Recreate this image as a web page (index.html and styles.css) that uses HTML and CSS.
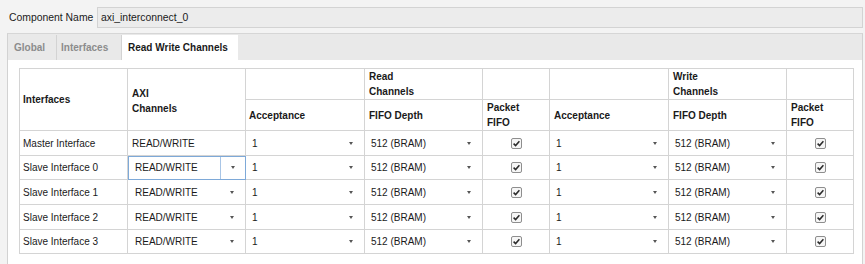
FILE: index.html
```html
<!DOCTYPE html>
<html lang="en">
<head>
    <meta charset="UTF-8">
    <title>axi_interconnect_0 - Read Write Channels</title>
    <link rel="stylesheet" href="styles.css">
</head>
<body>
    <div class="name-row">
        <label class="name-label">Component Name</label>
        <div class="name-input">axi_interconnect_0</div>
    </div>

    <div class="tabs-panel">
        <div class="tab-bar">
            <div class="tab tab-global">Global</div>
            <div class="tab tab-ifaces">Interfaces</div>
            <div class="tab tab-active">Read Write Channels</div>
        </div>

        <div class="panel-body">
            <table class="chan-table">
                <colgroup>
                    <col style="width:108px">
                    <col style="width:118px">
                    <col style="width:119px">
                    <col style="width:118px">
                    <col style="width:67px">
                    <col style="width:119px">
                    <col style="width:118px">
                    <col style="width:67px">
                </colgroup>
                <thead>
                    <tr class="head-1">
                        <th rowspan="2">Interfaces</th>
                        <th rowspan="2" class="axi-head">AXI<br>Channels</th>
                        <th></th>
                        <th>Read<br>Channels</th>
                        <th></th>
                        <th></th>
                        <th>Write<br>Channels</th>
                        <th></th>
                    </tr>
                    <tr class="head-2">
                        <th>Acceptance</th>
                        <th>FIFO Depth</th>
                        <th>Packet<br>FIFO</th>
                        <th>Acceptance</th>
                        <th>FIFO Depth</th>
                        <th>Packet<br>FIFO</th>
                    </tr>
                </thead>
                <tbody id="rows"></tbody>
            </table>
        </div>
    </div>

    <script>
        const rows = [
            { name: 'Master Interface', h: 25, fixed: true },
            { name: 'Slave Interface 0', h: 24, focus: true },
            { name: 'Slave Interface 1', h: 25 },
            { name: 'Slave Interface 2', h: 25 },
            { name: 'Slave Interface 3', h: 24 }
        ];

        const arrow = '<span class="arrow"><i></i></span>';
        const check = '<span class="check"><svg width="9" height="9" viewBox="0 0 9 9"><path d="M1.6 4.6 L3.6 6.6 L7.4 2.2" fill="none" stroke="#2a2a2a" stroke-width="1.5"/></svg></span>';

        function combo(text) {
            return `<div class="combo"><span class="val">${text}</span>${arrow}</div>`;
        }

        const body = document.getElementById('rows');
        rows.forEach(r => {
            const tr = document.createElement('tr');
            tr.style.height = r.h + 'px';

            let axi;
            if (r.fixed) {
                axi = '<td class="plain">READ/WRITE</td>';
            } else if (r.focus) {
                axi = `<td class="sel focused">${combo('READ/WRITE')}</td>`;
            } else {
                axi = `<td class="sel axi">${combo('READ/WRITE')}</td>`;
            }

            tr.innerHTML = `
                <td class="iface">${r.name}</td>
                ${axi}
                <td class="sel">${combo('1')}</td>
                <td class="sel">${combo('512 (BRAM)')}</td>
                <td class="box">${check}</td>
                <td class="sel">${combo('1')}</td>
                <td class="sel">${combo('512 (BRAM)')}</td>
                <td class="box">${check}</td>
            `;
            body.appendChild(tr);
        });
    </script>
</body>
</html>
```

FILE: styles.css
```css
html, body {
    margin: 0;
    height: 100%;
}
body {
    font-family: "Liberation Sans", Arial, sans-serif;
    font-size: 10px;
    color: #1a1a1a;
    background-color: #f3f3f3;
    overflow: hidden;
}

/* component name line */
.name-row {
    display: flex;
    align-items: center;
    padding: 7px 2px 0 9px;
}
.name-label {
    width: 88px;
    font-size: 10.4px;
}
.name-input {
    flex: 1;
    height: 21px;
    box-sizing: border-box;
    border: 1px solid #d3d3d3;
    background: #ececec;
    padding-left: 3px;
    line-height: 19px;
    font-size: 10.4px;
}

/* tabs */
.tabs-panel {
    margin: 5px 2px 0 7px;
    border-left: 1px solid #d2d2d2;
    border-right: 1px solid #d2d2d2;
    border-top: 1px solid #d6d6d6;
    height: 240px;
    display: flex;
    flex-direction: column;
}
.tab-bar {
    display: flex;
    align-items: flex-end;
    height: 26px;
    background: #e9e9e9;
}
.tab {
    height: 25px;
    line-height: 25px;
    box-sizing: border-box;
    padding-left: 6px;
    font-weight: bold;
    color: #8c8c8c;
    border-right: 1px solid #d3d3d3;
}
.tab-global {
    width: 49px;
}
.tab-ifaces {
    width: 65px;
    padding-left: 4px;
}
.tab-active {
    width: 116px;
    background: #fff;
    color: #1a1a1a;
    border-right: none;
}

.panel-body {
    flex: 1;
    background: #fff;
    padding: 8px 0 0 11px;
}

/* channel table */
.chan-table {
    border-collapse: collapse;
    table-layout: fixed;
    width: 835px;
}
.chan-table th,
.chan-table td {
    border: 1px solid #d4d4d4;
    padding: 0;
    vertical-align: middle;
    text-align: left;
    white-space: nowrap;
    overflow: hidden;
}
.chan-table th {
    font-weight: bold;
    line-height: 15px;
    padding-left: 4px;
}
.head-1 {
    height: 31px;
}
.head-2 {
    height: 31px;
}
.chan-table th.axi-head {
    padding-top: 2px;
}
.chan-table th:first-child {
    padding-left: 3px;
}
.chan-table td.iface {
    padding-left: 3px;
}
.chan-table td.plain {
    padding-left: 4px;
}

.combo {
    display: flex;
    align-items: center;
}
.val {
    flex: 1;
    padding-left: 6px;
}
.axi .val {
    padding-left: 7px;
}
.arrow {
    width: 26px;
    height: 18px;
    display: flex;
    justify-content: center;
    align-items: center;
}
.arrow i {
    width: 0;
    height: 0;
    border-left: 2.5px solid transparent;
    border-right: 2.5px solid transparent;
    border-top: 3px solid #555;
}

.chan-table td.focused {
    outline: 1px solid #7ea9d8;
    outline-offset: -1px;
}
.focused .combo {
    height: 23px;
}
.focused .val {
    padding-left: 7px;
}
.focused .arrow {
    width: 23px;
    height: 100%;
    margin-right: 1px;
    border-left: 1px solid #a8c5e6;
}

.chan-table td.box {
    text-align: center;
}
.check {
    display: inline-flex;
    align-items: center;
    justify-content: center;
    width: 11px;
    height: 11px;
    box-sizing: border-box;
    border: 1px solid #8e8e8e;
    border-radius: 2px;
    background: #f6f6f6;
    vertical-align: middle;
}
.check svg {
    display: block;
}
```
